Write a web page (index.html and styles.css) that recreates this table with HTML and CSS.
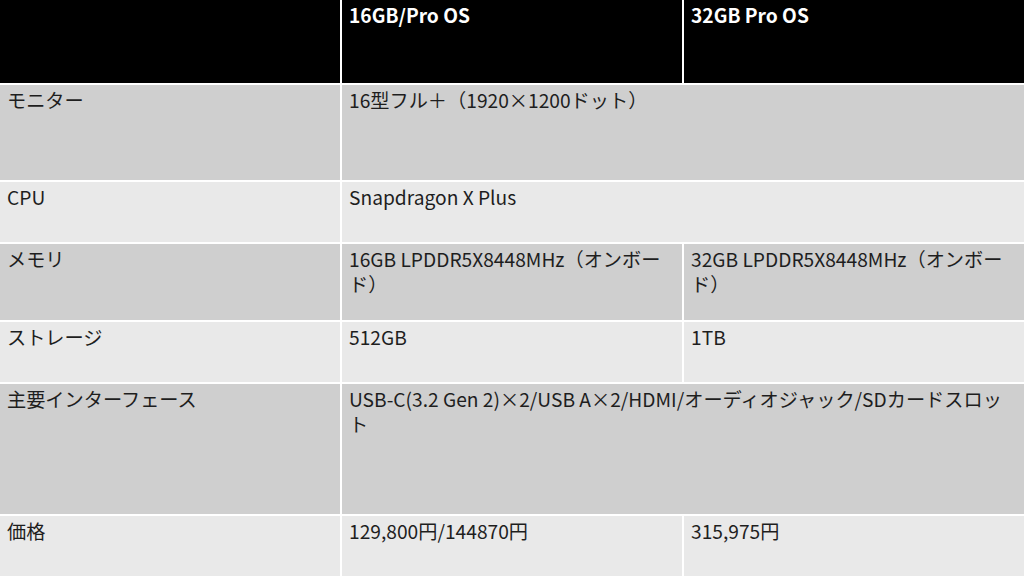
FILE: index.html
```html
<!DOCTYPE html>
<html lang="ja">
<head>
<meta charset="utf-8">
<link rel="stylesheet" href="styles.css">
</head>
<body>
<div class="spec">
  <div class="cell head"></div>
  <div class="cell head">16GB/Pro OS</div>
  <div class="cell head">32GB Pro OS</div>

  <div class="cell dark">モニター</div>
  <div class="cell dark span2">16型フル＋（1920×1200ドット）</div>

  <div class="cell light">CPU</div>
  <div class="cell light span2">Snapdragon X Plus</div>

  <div class="cell dark">メモリ</div>
  <div class="cell dark">16GB LPDDR5X8448MHz（オンボード）</div>
  <div class="cell dark">32GB LPDDR5X8448MHz（オンボード）</div>

  <div class="cell light">ストレージ</div>
  <div class="cell light">512GB</div>
  <div class="cell light">1TB</div>

  <div class="cell dark">主要インターフェース</div>
  <div class="cell dark span2">USB-C(3.2 Gen 2)×2/USB A×2/HDMI/オーディオジャック/SDカードスロット</div>

  <div class="cell light">価格</div>
  <div class="cell light">129,800円/144870円</div>
  <div class="cell light">315,975円</div>
</div>
</body>
</html>
```
FILE: styles.css
```css
html, body {
  margin: 0;
  padding: 0;
  background: #ffffff;
}
body {
  width: 1024px;
  height: 576px;
  overflow: hidden;
  font-family: "Noto Sans CJK JP", "Noto Sans", sans-serif;
}
.spec {
  display: grid;
  grid-template-columns: 340px 340px 340px;
  grid-template-rows: 83px 95px 60px 76px 60px 130px 60px;
  gap: 2px;
  background: #ffffff;
}
.cell {
  padding: 3px 8px 0 7px;
  font-size: 19.2px;
  line-height: 25px;
  color: #1e1e1e;
  box-sizing: border-box;
  overflow: hidden;
}
.head {
  background: #000000;
  color: #ffffff;
  font-weight: bold;
}
.dark { background: #cfcfcf; }
.light { background: #e9e9e9; }
.span2 { grid-column: span 2; }
```
